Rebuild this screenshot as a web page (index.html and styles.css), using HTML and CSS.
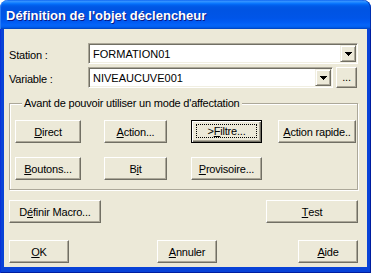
FILE: index.html
```html
<!DOCTYPE html>
<html lang="fr">
<head>
<meta charset="utf-8">
<title>Définition de l'objet déclencheur</title>
<link rel="stylesheet" href="styles.css">
</head>
<body>
<div class="window">
  <div class="titlebar"><span class="title">Définition de l'objet déclencheur</span></div>
  <div class="frame">
    <div class="client">
      <div class="field-row">
        <span class="lbl">Station :</span>
        <div class="combo combo-station">
          <span class="combo-text">FORMATION01</span>
          <span class="dd"><svg width="7" height="4" viewBox="0 0 7 4" shape-rendering="crispEdges"><rect x="0" y="0" width="7" height="1"/><rect x="1" y="1" width="5" height="1"/><rect x="2" y="2" width="3" height="1"/><rect x="3" y="3" width="1" height="1"/></svg></span>
        </div>
      </div>
      <div class="field-row field-row-2">
        <span class="lbl">Variable :</span>
        <div class="combo combo-var">
          <span class="combo-text">NIVEAUCUVE001</span>
          <span class="dd"><svg width="7" height="4" viewBox="0 0 7 4" shape-rendering="crispEdges"><rect x="0" y="0" width="7" height="1"/><rect x="1" y="1" width="5" height="1"/><rect x="2" y="2" width="3" height="1"/><rect x="3" y="3" width="1" height="1"/></svg></span>
        </div>
        <button class="btn btn-dots">...</button>
      </div>
      <fieldset class="group">
        <legend class="group-title">Avant de pouvoir utiliser un mode d'affectation</legend>
        <div class="mode-grid">
          <button class="btn w-direct"><u>D</u>irect</button>
          <button class="btn w-action"><u>A</u>ction...</button>
          <button class="btn btn-default w-filtre"><span class="focus">&gt;<u>F</u>iltre...</span></button>
          <button class="btn w-rapide"><u>A</u>ction rapide..</button>
          <button class="btn w-direct"><u>B</u>outons...</button>
          <button class="btn w-action">B<u>i</u>t</button>
          <button class="btn w-filtre"><u>P</u>rovisoire...</button>
        </div>
      </fieldset>
      <div class="macro-row">
        <button class="btn w-wide">D<u>é</u>finir Macro...</button>
        <button class="btn w-wide"><u>T</u>est</button>
      </div>
      <div class="bottom-row">
        <button class="btn w-small"><u>O</u>K</button>
        <button class="btn w-small btn-cancel"><u>A</u>nnuler</button>
        <button class="btn w-small btn-help"><u>A</u>ide</button>
      </div>
    </div>
  </div>
</div>
</body>
</html>
```

FILE: styles.css
```css
html, body {
  margin: 0;
  padding: 0;
  background: #ffffff;
}

body {
  font-family: "Liberation Sans", Arial, sans-serif;
  font-size: 11px;
  color: #000;
}

.window {
  width: 371px;
  height: 273px;
  display: flex;
  flex-direction: column;
}

.titlebar {
  height: 29px;
  box-sizing: border-box;
  padding: 8px 0 0 6px;
  border-radius: 8px 8px 0 0;
  background: linear-gradient(to bottom,
    #0058ee 0px, #3a93ff 1px, #288eff 2px, #127dff 3px, #036ffc 4px,
    #0262ee 5px, #0057e5 7px, #0054e3 10px, #0055e8 18px, #005bf3 22px,
    #0564f8 25px, #0160f0 27px, #0050d8 28px, #0040b8 29px);
  box-shadow: inset 1px 0 0 #2a7bf5, inset -1px 0 0 #0030b0;
}

.title {
  display: block;
  font-family: "Liberation Sans", Arial, sans-serif;
  font-weight: bold;
  font-size: 13px;
  line-height: 15px;
  color: #ffffff;
  text-shadow: 1px 1px 0 #0a1883;
  white-space: nowrap;
}

.frame {
  flex: 1;
  display: flex;
  padding: 0 4px 6px 4px;
  background: #0842d7;
  box-shadow: inset 1px 0 0 #0831d9, inset -1px 0 0 #001ea0, inset 0 -1px 0 #001ea0;
}

.client {
  flex: 1;
  background: #ece9d8;
  padding: 14px 9px 0 5px;
  letter-spacing: -0.2px;
}

.field-row {
  display: flex;
  align-items: center;
  height: 21px;
}

.field-row-2 {
  margin-top: 3px;
}

.lbl {
  width: 79px;
  flex: none;
  padding-top: 2px;
}

.combo {
  box-sizing: border-box;
  height: 21px;
  display: flex;
  align-items: center;
  background: #ffffff;
  border: 1px solid;
  border-color: #aca899 #ffffff #ffffff #aca899;
  box-shadow: inset 1px 1px 0 #716f64, inset -1px -1px 0 #f1efe2;
  padding: 2px 1px 2px 4px;
}

.combo-station {
  width: 270px;
}

.combo-var {
  width: 245px;
}

.combo-text {
  flex: 1;
  letter-spacing: 0;
  white-space: nowrap;
}

.dd {
  box-sizing: border-box;
  width: 16px;
  height: 17px;
  display: flex;
  align-items: center;
  justify-content: center;
  background: #ece9d8;
  border: 1px solid;
  border-color: #f1efe2 #716f64 #716f64 #f1efe2;
  box-shadow: inset 1px 1px 0 #ffffff, inset -1px -1px 0 #aca899;
}

.dd svg {
  fill: #000;
  display: block;
}

.btn {
  box-sizing: border-box;
  height: 23px;
  padding: 0;
  margin: 0;
  background: #ece9d8;
  border: 1px solid;
  border-color: #ffffff #716f64 #716f64 #ffffff;
  box-shadow: inset -1px -1px 0 #aca899;
  font-family: "Liberation Sans", Arial, sans-serif;
  font-size: 11px;
  letter-spacing: -0.2px;
  color: #000;
  white-space: nowrap;
  display: flex;
  align-items: center;
  justify-content: center;
}

.btn u {
  text-decoration: underline;
  text-decoration-thickness: 1px;
  text-underline-offset: 1px;
}

.btn-dots {
  width: 21px;
  height: 21px;
  margin-left: 3px;
  padding-bottom: 2px;
}

.btn-default {
  border-color: #000;
  box-shadow: inset 1px 1px 0 #ffffff, inset -1px -1px 0 #716f64, inset -2px -2px 0 #aca899;
  position: relative;
}

.focus {
  position: absolute;
  left: 4px;
  right: 4px;
  top: 3px;
  bottom: 4px;
  border: 1px dotted #000;
  display: flex;
  align-items: center;
  justify-content: center;
}

.group {
  margin: 9px 0 0 0;
  padding: 10px 0 9px 5px;
  border: 1px solid #aca899;
  box-shadow: 1px 1px 0 #ffffff, inset 1px 1px 0 #ffffff;
  min-width: 0;
}

.group-title {
  margin-left: 7px;
  padding: 0 2px;
  line-height: 13px;
  background: #ece9d8;
}

.mode-grid {
  display: grid;
  grid-template-columns: 89px 87px 87px 78px;
  row-gap: 14px;
}

.w-direct { width: 66px; }
.w-action { width: 63px; }
.w-filtre { width: 71px; }
.w-rapide { width: 78px; }
.w-wide { width: 92px; }
.w-small { width: 60px; }

.macro-row {
  display: flex;
  justify-content: space-between;
  margin-top: 10px;
}

.bottom-row {
  display: flex;
  margin-top: 17px;
}

.btn-cancel {
  margin-left: 88px;
}

.btn-help {
  margin-left: auto;
}
```
